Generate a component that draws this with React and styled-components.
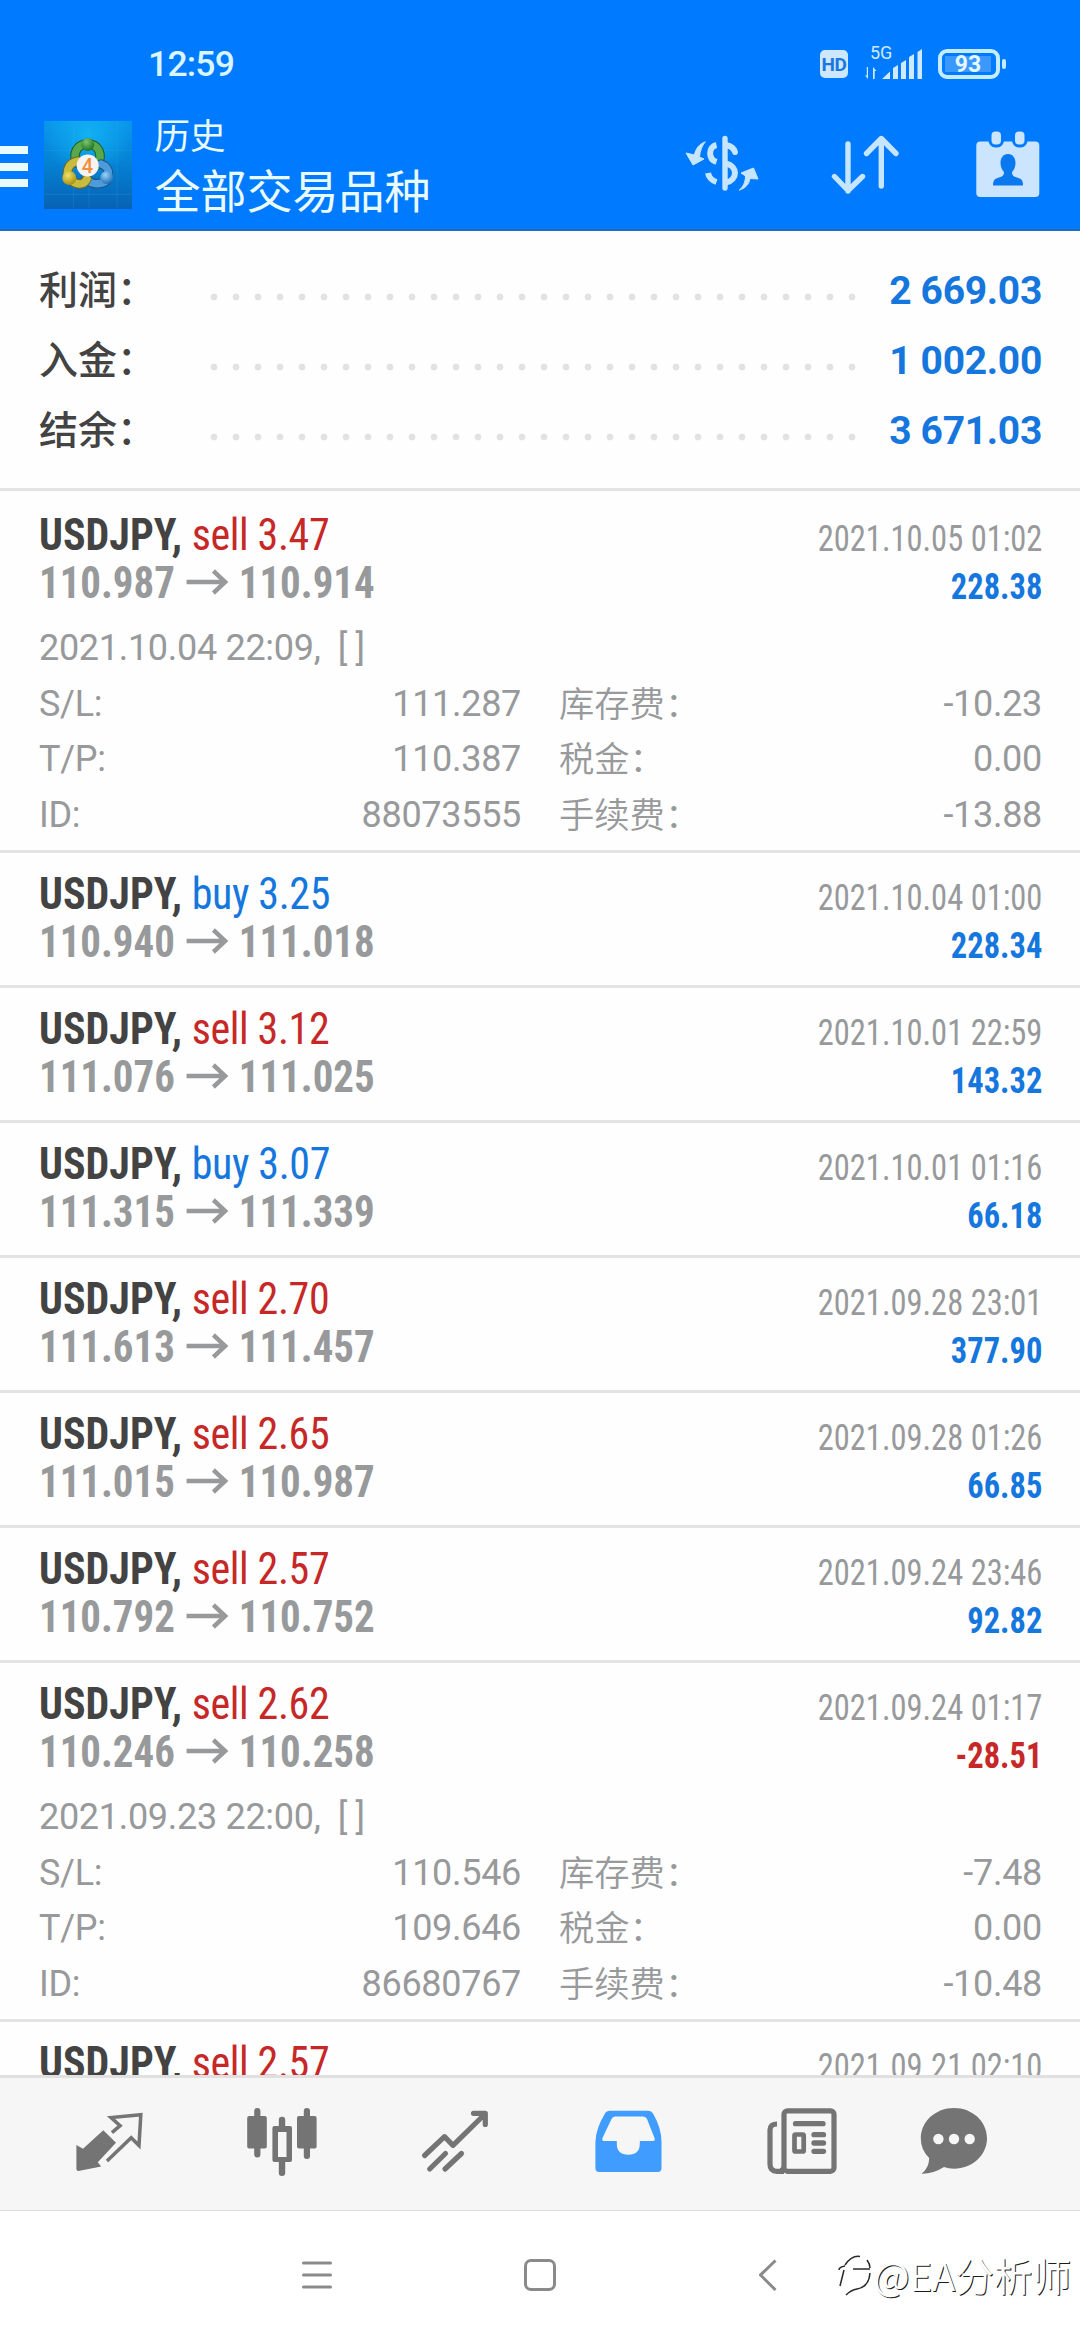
import React from 'react';
import styled, { createGlobalStyle } from 'styled-components';

const GlobalStyle = createGlobalStyle`
  * {
    box-sizing: border-box;
  }

  body {
    margin: 0;
    background: #fff;
    font-family: Roboto, 'Noto Sans CJK SC', sans-serif;
  }
`

const Screen = styled.div`
  display: flex;
  flex-direction: column;
  width: 1080px;
  height: 2340px;
  overflow: hidden;
  background: #fefefe;
`

/* ---------- header ---------- */

const Header = styled.header`
  height: 231px;
  flex: none;
  background: #007aff;
  border-bottom: 2px solid #1f6db8;
  color: #e8fbff;
`

const StatusBar = styled.div`
  display: flex;
  align-items: center;
  height: 100px;
  padding: 28px 74px 0 148px;
`

const Clock = styled.span`
  flex: 1;
  font-size: 35.5px;
  font-weight: 500;
  line-height: 48px;
  letter-spacing: -0.8px;
  color: #d9f5ff;
`

const HdBadge = styled.span`
  width: 28px;
  height: 28px;
  margin-right: 17px;
  border-radius: 5px;
  background: #cde7ff;
  color: #1a78dc;
  font-size: 19px;
  font-weight: 700;
  line-height: 29px;
  text-align: center;
  letter-spacing: -0.5px;
`

const Signal = styled.div`
  display: flex;
  flex-direction: column;
  width: 58px;
  height: 34px;
  margin-right: 15px;
  margin-top: -3px;
`

const Network = styled.span`
  height: 14px;
  padding-left: 5px;
  font-size: 18px;
  line-height: 14px;
  color: #cdeaff;
`

const SignalBars = styled.svg`
  width: 58px;
  height: 30px;
  margin-top: -11px;
`

const Battery = styled.div`
  display: flex;
  align-items: center;
`

const BatteryBody = styled.div`
  width: 62px;
  height: 30px;
  padding: 3px;
  border: 4px solid #c4ecff;
  border-radius: 9px;
`

const BatteryLevel = styled.div`
  width: 46px;
  height: 16px;
  background: #3a98ff;
  color: #e4f8ff;
  font-size: 23px;
  font-weight: 700;
  line-height: 17px;
  text-align: center;
`

const BatteryTip = styled.div`
  width: 4px;
  height: 10px;
  margin-left: 2px;
  border-radius: 2px;
  background: #c4ecff;
`

const Toolbar = styled.div`
  display: flex;
  align-items: center;
  height: 129px;
  padding-right: 32px;
`

const MenuButton = styled.div`
  display: flex;
  flex-direction: column;
  gap: 8.5px;
  width: 28px;
  margin: 4px 16px 0 0;

  span {
    height: 8px;
    background: #e8fbff;
  }
`

const Titles = styled.div`
  flex: 1;
  margin-left: 22.5px;
  font-family: 'Noto Sans CJK SC', sans-serif;
`

const Subtitle = styled.div`
  font-size: 35.5px;
  line-height: 47px;
`

const Title = styled.div`
  font-size: 46px;
  line-height: 62px;
`

const ToolIcon = styled.svg`
  width: ${p => p.$width || 90}px;
  height: 80px;
  margin-left: ${p => p.$gap || 0}px;
  fill: none;
  stroke: #c6e6ff;
  stroke-width: 5.4;
  stroke-linecap: round;
  stroke-linejoin: round;
`

/* ---------- summary ---------- */

const Summary = styled.section`
  flex: none;
  padding: 25px 38px 22px 39px;
  margin-bottom: 3px;
  border-bottom: 3px solid #e3e3e3;
`

const SummaryRow = styled.div`
  display: flex;
  height: 70px;
`

const SummaryLabel = styled.span`
  width: 163.5px;
  font-family: 'Noto Sans CJK SC', sans-serif;
  font-size: 39px;
  font-weight: 500;
  line-height: 63px;
  color: #434343;
`

const Dots = styled.span`
  width: 660px;
  height: 8px;
  margin-top: 37px;
  background: radial-gradient(circle at center, #e2e2e2 3px, transparent 3.8px) 0 0 / 22px 8px repeat-x;
`

const SummaryValue = styled.span`
  flex: 1;
  font-size: 39px;
  font-weight: 700;
  letter-spacing: -0.3px;
  line-height: 70px;
  text-align: right;
  white-space: nowrap;
  color: #1577dd;
`

/* ---------- deals ---------- */

const DealList = styled.main`
  flex: 1;
  min-height: 0;
  overflow: hidden;
`

const Deal = styled.article`
  height: ${p => (p.$open ? 359 : 135)}px;
  padding: 18px 38px 0 39px;
  border-bottom: 3px solid #e3e3e3;
`

const DealHead = styled.div`
  display: flex;
  justify-content: space-between;
  font-family: 'Roboto Condensed', Roboto, sans-serif;
  line-height: 48px;
  white-space: nowrap;
`

const Symbol = styled.div`
  font-size: 43.5px;
  font-weight: 700;
  color: #434343;
  transform: scaleX(0.965);
  transform-origin: left;
`

const Side = styled.span`
  font-weight: 400;
  letter-spacing: -0.4px;
  color: ${p => (p.$side === 'buy' ? '#1577dd' : '#c62828')};
`

const Prices = styled.div`
  display: flex;
  align-items: center;
  font-size: 43.5px;
  font-weight: 700;
  color: #97999b;
  transform: scaleX(0.94);
  transform-origin: left;
`

const PriceArrow = styled.svg`
  width: 46px;
  height: 26px;
  margin: 0 11px 4px;
  fill: none;
  stroke: #97999b;
  stroke-width: 4.6;
`

const DealSide = styled.div`
  padding-top: 3px;
  text-align: right;
  transform: scaleX(0.89);
  transform-origin: right;
`

const CloseTime = styled.div`
  font-size: 36.5px;
  color: #97999b;
`

const Profit = styled.div`
  font-size: 36.5px;
  font-weight: 700;
  color: ${p => (p.$loss ? '#c62828' : '#1577dd')};
`

const Details = styled.div`
  margin-top: 10px;
  font-size: 36px;
  line-height: 55.67px;
  letter-spacing: -0.3px;
  color: #97999b;
`

const OpenTime = styled.div`
  white-space: pre;
`

const DetailGrid = styled.div`
  display: grid;
  grid-template-columns: 482px 483px;
  grid-auto-rows: 55.67px;
  column-gap: 38px;
`

const DetailItem = styled.div`
  display: flex;
  justify-content: space-between;
  align-items: flex-start;
`

const ChineseLabel = styled.span`
  font-family: 'Noto Sans CJK SC', sans-serif;
  font-size: 35.3px;
  font-weight: 350;
  line-height: 50px;
  letter-spacing: 0;
`

/* ---------- bottom ---------- */

const TabBar = styled.nav`
  display: flex;
  align-items: center;
  flex: none;
  height: 136px;
  padding-left: 22px;
  padding-bottom: 5px;
  border-top: 3px solid #e0e0e0;
  border-bottom: 1px solid #dedede;
  background: #f6f6f6;
`

const Tab = styled.div`
  display: flex;
  justify-content: center;
  width: ${p => p.$width || 173}px;
  color: ${p => (p.$active ? '#409cff' : '#747474')};

  svg {
    width: 72px;
    height: 72px;
    fill: currentColor;
  }
`

const SystemNav = styled.div`
  position: relative;
  display: flex;
  flex: none;
  align-items: center;
  height: 129px;
  padding-left: 301px;
  padding-bottom: 2px;
  background: #fff;
`

const NavGlyph = styled.svg`
  width: 32px;
  height: 36px;
  margin-right: ${p => p.$space || 0}px;
  fill: none;
  stroke: #8a8a8a;
  stroke-width: 3;
  stroke-linecap: round;
`

const Watermark = styled.div`
  position: absolute;
  top: 35px;
  right: 9px;
  display: flex;
  align-items: center;
  gap: 1px;
  font-family: 'Noto Sans CJK SC', sans-serif;
  font-size: 38.6px;
  font-weight: 350;
  line-height: 56px;
  color: #fff;
  text-shadow: 1px 1px 0.5px #1c1c1c;
  white-space: nowrap;

  svg {
    width: 34px;
    height: 44px;
    fill: none;
    stroke: #2a2a2a;
    stroke-width: 1.5;
  }
`

const TOTALS = [
    ['利润：', '2 669.03'],
    ['入金：', '1 002.00'],
    ['结余：', '3 671.03'],
]

const DEALS = [
    {
        side: 'sell', volume: '3.47', from: '110.987', to: '110.914', time: '2021.10.05 01:02', profit: '228.38',
        details: { opened: '2021.10.04 22:09', sl: '111.287', tp: '110.387', id: '88073555', swap: '-10.23', tax: '0.00', fee: '-13.88' },
    },
    { side: 'buy', volume: '3.25', from: '110.940', to: '111.018', time: '2021.10.04 01:00', profit: '228.34' },
    { side: 'sell', volume: '3.12', from: '111.076', to: '111.025', time: '2021.10.01 22:59', profit: '143.32' },
    { side: 'buy', volume: '3.07', from: '111.315', to: '111.339', time: '2021.10.01 01:16', profit: '66.18' },
    { side: 'sell', volume: '2.70', from: '111.613', to: '111.457', time: '2021.09.28 23:01', profit: '377.90' },
    { side: 'sell', volume: '2.65', from: '111.015', to: '110.987', time: '2021.09.28 01:26', profit: '66.85' },
    { side: 'sell', volume: '2.57', from: '110.792', to: '110.752', time: '2021.09.24 23:46', profit: '92.82' },
    {
        side: 'sell', volume: '2.62', from: '110.246', to: '110.258', time: '2021.09.24 01:17', profit: '-28.51',
        details: { opened: '2021.09.23 22:00', sl: '110.546', tp: '109.646', id: '86680767', swap: '-7.48', tax: '0.00', fee: '-10.48' },
    },
    { side: 'sell', volume: '2.57', time: '2021.09.21 02:10' },
]

const Logo = () => (
    <svg width="88" height="88" viewBox="0 0 88 88">
        <defs>
            <linearGradient id="sky" x1="0" y1="0" x2="0" y2="1">
                <stop offset="0" stopColor="#0a96ec" />
                <stop offset="0.5" stopColor="#0580d2" />
                <stop offset="1" stopColor="#0762b4" />
            </linearGradient>
            <radialGradient id="glow" cx="0.5" cy="0.15" r="0.5">
                <stop offset="0" stopColor="#12b4f4" stopOpacity="0.9" />
                <stop offset="1" stopColor="#12b4f4" stopOpacity="0" />
            </radialGradient>
            <radialGradient id="greenBall" cx="0.4" cy="0.3" r="0.7">
                <stop offset="0" stopColor="#7cc66c" />
                <stop offset="1" stopColor="#1f7424" />
            </radialGradient>
            <radialGradient id="yellowBall" cx="0.4" cy="0.3" r="0.7">
                <stop offset="0" stopColor="#f2e26c" />
                <stop offset="1" stopColor="#a8920c" />
            </radialGradient>
            <radialGradient id="blueBall" cx="0.4" cy="0.3" r="0.7">
                <stop offset="0" stopColor="#9cd2f6" />
                <stop offset="1" stopColor="#1f70b8" />
            </radialGradient>
        </defs>
        <rect width="88" height="88" fill="url(#sky)" />
        <rect width="88" height="88" fill="url(#glow)" />
        <path d="M29.500 0V88M45 0V88M73 0V88M0 29.500H88M0 73.500H88" stroke="#4fb4ee" strokeOpacity="0.16" />
        <g fill="none" strokeLinecap="round">
            <path d="M33 42C28 33 33 23 43.700 23S59 33 54 44" stroke="#1d5a2c" strokeWidth="9.500" />
            <path d="M33 42C28 33 33 23 43.700 23S59 33 54 44" stroke="#58a84c" strokeWidth="7.500" />
            <path d="M57 43C67 46 67 60 58 62S45 62 42 55" stroke="#1b5280" strokeWidth="9.500" />
            <path d="M57 43C67 46 67 60 58 62S45 62 42 55" stroke="#4c9cdc" strokeWidth="7.500" />
            <path d="M34 40C23 42 20 54 28 60S41 62 43 58" stroke="#6c6a24" strokeWidth="9.500" />
            <path d="M34 40C23 42 20 54 28 60S41 62 43 58" stroke="#c8bc40" strokeWidth="7.500" />
        </g>
        <circle cx="43.700" cy="23.500" r="6.500" fill="url(#greenBall)" />
        <circle cx="25.300" cy="57" r="7" fill="url(#yellowBall)" />
        <circle cx="62.700" cy="56.500" r="6.500" fill="url(#blueBall)" />
        <circle cx="43.700" cy="44.500" r="11" fill="#f6f4f2" />
        <text x="43.500" y="51.500" textAnchor="middle" fontFamily="Roboto" fontWeight="500" fontSize="20" fill="#f0903c">4</text>
    </svg>
)

const TopBar = () => (
    <Header>
        <StatusBar>
            <Clock>12:59</Clock>
            <HdBadge>HD</HdBadge>
            <Signal>
                <Network>5G</Network>
                <SignalBars viewBox="0 0 58 30" fill="#cdeaff">
                    <path d="M3 18V30L0 26.500H1.800V18ZM8 30V18L11.500 22H9.700V30Z" />
                    <path d="M17 30L25 22.500V30ZM28 30V19L33 16V30ZM36 30V14L41 11V30ZM44 30V8L49 5V30ZM52.500 30V3L57 0V30Z" />
                </SignalBars>
            </Signal>
            <Battery>
                <BatteryBody>
                    <BatteryLevel>93</BatteryLevel>
                </BatteryBody>
                <BatteryTip />
            </Battery>
        </StatusBar>
        <Toolbar>
            <MenuButton><span /><span /><span /></MenuButton>
            <Logo />
            <Titles>
                <Subtitle>历史</Subtitle>
                <Title>全部交易品种</Title>
            </Titles>
            <ToolIcon viewBox="0 0 90 80">
                <path d="M45 13.500V63" />
                <path d="M36.500 20C28 22 28 34 36.500 37M28 48C29 53 32 55.500 36.500 57" strokeLinecap="butt" strokeWidth="6" />
                <path d="M46 20C51 21 54 23.500 55 27M46 38.500C58 41 58 55 46 57.500" strokeWidth="6" />
                <path d="M25 17C19 19 15.500 24 14.500 30L6 28L13 40L24 34L19.500 32C20 26 22 21 25 17Z" fill="#c6e6ff" strokeWidth="1" />
                <path d="M59.500 65C66 63 69 59 70 53.500L78 54L73.500 43L61 48L65.500 51C65.500 57 63 62 59.500 65Z" fill="#c6e6ff" strokeWidth="1" />
            </ToolIcon>
            <ToolIcon $gap={50} viewBox="0 0 90 80">
                <path d="M28 19V66M14.500 51.500L28 65.500L42.500 51.500M61.300 61V14M46.500 28.500L61.300 13.500L76 28.500" />
            </ToolIcon>
            <ToolIcon $gap={58} $width={80} viewBox="0 0 80 80">
                <rect x="8.300" y="16.500" width="63" height="55.500" rx="4" fill="#cbe4ff" stroke="none" />
                <rect x="23.500" y="6.500" width="9.500" height="13" rx="4" fill="#007aff" stroke="#007aff" strokeWidth="6" />
                <rect x="47" y="6.500" width="9.500" height="13" rx="4" fill="#007aff" stroke="#007aff" strokeWidth="6" />
                <rect x="23.500" y="6.500" width="9.500" height="13" rx="4" fill="#cbe4ff" stroke="none" />
                <rect x="47" y="6.500" width="9.500" height="13" rx="4" fill="#cbe4ff" stroke="none" />
                <path d="M40 29C35 29 32.500 33 32.500 38C32.500 42 34 45 36 47C36 50 35 51.500 31 52.500C27 53.500 25 55 25 60.500H55C55 55 53 53.500 49 52.500C45 51.500 44 50 44 47C46 45 47.500 42 47.500 38C47.500 33 45 29 40 29Z" fill="#0a78ee" stroke="none" />
            </ToolIcon>
        </Toolbar>
    </Header>
)

const DealDetails = ({ details }) => (
    <Details>
        <OpenTime>{details.opened},{'  '}[ ]</OpenTime>
        <DetailGrid>
            <DetailItem><span>S/L:</span><span>{details.sl}</span></DetailItem>
            <DetailItem><ChineseLabel>库存费：</ChineseLabel><span>{details.swap}</span></DetailItem>
            <DetailItem><span>T/P:</span><span>{details.tp}</span></DetailItem>
            <DetailItem><ChineseLabel>税金：</ChineseLabel><span>{details.tax}</span></DetailItem>
            <DetailItem><span>ID:</span><span>{details.id}</span></DetailItem>
            <DetailItem><ChineseLabel>手续费：</ChineseLabel><span>{details.fee}</span></DetailItem>
        </DetailGrid>
    </Details>
)

const DealRow = ({ deal }) => (
    <Deal $open={!!deal.details}>
        <DealHead>
            <div>
                <Symbol>USDJPY, <Side $side={deal.side}>{deal.side} {deal.volume}</Side></Symbol>
                {deal.from && (
                    <Prices>
                        {deal.from}
                        <PriceArrow viewBox="0 0 44 26"><path d="M0 13H41M28.500 2L41 13L28.500 24" /></PriceArrow>
                        {deal.to}
                    </Prices>
                )}
            </div>
            <DealSide>
                <CloseTime>{deal.time}</CloseTime>
                {deal.profit && <Profit $loss={deal.profit.startsWith('-')}>{deal.profit}</Profit>}
            </DealSide>
        </DealHead>
        {deal.details && <DealDetails details={deal.details} />}
    </Deal>
)

const Tabs = () => (
    <TabBar>
        <Tab>
            <svg viewBox="0 0 72 72">
                <path d="M3.400 39L10 42.700L30.300 24.300L43 36.700L24.800 56.300L28.200 60.500L5.500 65Q3.400 65 3.400 63Z" />
                <path d="M38.900 26.700L47.100 19.700L38 11.500L67.800 8.700L66 39.500L58.200 31.700L34 55" fill="none" stroke="currentColor" strokeWidth="3.500" />
            </svg>
        </Tab>
        <Tab>
            <svg viewBox="0 0 72 72">
                <rect x="1.200" y="10" width="19.600" height="32.500" rx="2" />
                <rect x="8.200" y="2" width="6.200" height="49.500" rx="3" />
                <rect x="51" y="10" width="19.600" height="32.500" rx="2" />
                <rect x="57.800" y="2" width="6.200" height="51" rx="3" />
                <rect x="32.800" y="10.700" width="6.400" height="15" rx="3" />
                <rect x="32.800" y="53" width="6.400" height="17" rx="3" />
                <path d="M28.400 20H44Q46 20 46 22V54Q46 56 44 56H28.400Q26.400 56 26.400 54V22Q26.400 20 28.400 20ZM32 26V51H40.500V26Z" fillRule="evenodd" />
            </svg>
        </Tab>
        <Tab>
            <svg viewBox="0 0 72 72">
                <g fill="none" stroke="currentColor" strokeWidth="5.200" strokeLinecap="round" strokeLinejoin="round">
                    <path d="M5.600 49.500L25.500 30.700L34 39.300L65 9M54.500 7.300H66.300V18.500" />
                    <path d="M10.700 63L26.500 47.500M26 63L42.500 47.500" />
                </g>
            </svg>
        </Tab>
        <Tab $active>
            <svg viewBox="0 0 72 72">
                <path d="M18 4.700H56.500Q59.500 4.700 61 7.500Q69.500 22 69.500 36V62Q69.500 66 65.500 66H7.400Q3.400 66 3.400 62V36Q4 22 13 7.500Q14.500 4.700 18 4.700ZM23 10.500Q20.500 10.500 19.500 13L10.500 32Q9.500 35 12 35H24.800V38Q25 48.700 36.300 48.700T47.800 38V35H61Q63.500 35 62.500 32L55 13Q54 10.500 51 10.500Z" fillRule="evenodd" />
            </svg>
        </Tab>
        <Tab>
            <svg viewBox="0 0 72 72">
                <g fill="none" stroke="currentColor">
                    <rect x="19" y="4.800" width="50" height="60.500" rx="3.500" strokeWidth="5.200" />
                    <path d="M12 18Q5 18 5 24V58Q5 65.300 12 65.300H19" strokeWidth="5.200" />
                    <path d="M15 64Q19 64 19 58" strokeWidth="4" />
                    <path d="M30.500 17.700H58M49 28.700H58.500M49 37H58.500M49 45.300H58.500" strokeWidth="5.300" strokeLinecap="round" />
                    <rect x="29.500" y="28.500" width="9.200" height="17" rx="1" strokeWidth="4.700" />
                </g>
            </svg>
        </Tab>
        <Tab $width={133}>
            <svg viewBox="0 0 72 72">
                <path d="M36 2C54.500 2 69 15.500 69 32.300S54.500 62.700 36 62.700Q30.500 62.700 26 61Q15 68 3.500 67.700Q11 62 11.200 52Q2.800 44 2.800 32.300C2.800 15.500 17.500 2 36 2Z" />
                <g fill="#f6f6f6">
                    <circle cx="20.400" cy="33" r="5.200" />
                    <circle cx="36" cy="33" r="5.200" />
                    <circle cx="51.700" cy="33" r="5.200" />
                </g>
            </svg>
        </Tab>
    </TabBar>
)

const App = () => {
    return (
        <>
            <GlobalStyle />
            <Screen>
                <TopBar />

                <Summary>
                    {TOTALS.map(([label, value]) => (
                        <SummaryRow key={label}>
                            <SummaryLabel>{label}</SummaryLabel>
                            <Dots />
                            <SummaryValue>{value}</SummaryValue>
                        </SummaryRow>
                    ))}
                </Summary>

                <DealList>
                    {DEALS.map(deal => <DealRow key={deal.time} deal={deal} />)}
                </DealList>

                <Tabs />

                <SystemNav>
                    <NavGlyph $space={191} viewBox="0 0 32 36">
                        <path d="M2.500 6H29.500M2.500 18H29.500M2.500 30H29.500" />
                    </NavGlyph>
                    <NavGlyph $space={203} viewBox="0 0 32 36">
                        <rect x="1.500" y="3.500" width="29" height="29" rx="5.500" />
                    </NavGlyph>
                    <NavGlyph viewBox="0 0 32 36">
                        <path d="M16.500 3.500L1.500 18L16.500 33" strokeLinecap="butt" />
                    </NavGlyph>
                    <Watermark>
                        <svg viewBox="0 0 34 44">
                            <path d="M7 13Q14 3 22 4.500M29 8Q32 12 32 16M1 18Q1 15 7 14M15 17H32M6 18L2 34M32 21Q31 35 19 37Q13 38 8 43" />
                        </svg>
                        @EA分析师
                    </Watermark>
                </SystemNav>
            </Screen>
        </>
    )
}

export default App;
